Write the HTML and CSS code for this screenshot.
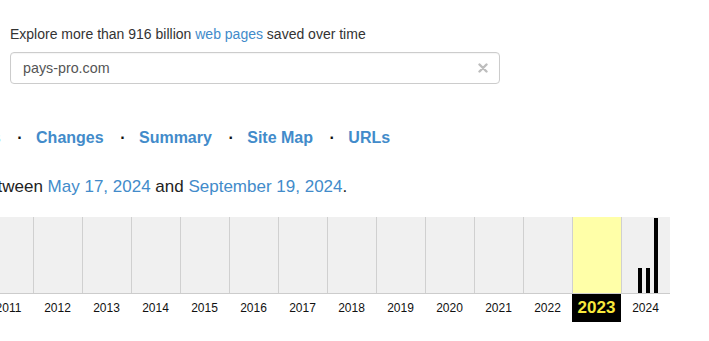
FILE: index.html
```html
<!DOCTYPE html>
<html lang="en">
<head>
<meta charset="utf-8">
<title>Wayback Machine</title>
<link rel="stylesheet" href="styles.css">
</head>
<body>
<div class="search">
  <p class="explore">Explore more than 916 billion <a href="#">web pages</a> saved over time</p>
  <div class="search-box">
    <span class="search-value">pays-pro.com</span>
    <svg class="search-clear" width="10" height="10" viewBox="0 0 10 10" aria-hidden="true"><path d="M1.5 1.5 L8.5 8.5 M8.5 1.5 L1.5 8.5" stroke="#bdbdbd" stroke-width="2.4" stroke-linecap="round"/></svg>
  </div>
</div>

<nav class="tabs">
  <a href="#" class="tab tab-first">Collections</a>
  <span class="sep">&middot;</span>
  <a href="#" class="tab">Changes</a>
  <span class="sep">&middot;</span>
  <a href="#" class="tab">Summary</a>
  <span class="sep">&middot;</span>
  <a href="#" class="tab">Site Map</a>
  <span class="sep">&middot;</span>
  <a href="#" class="tab">URLs</a>
</nav>

<p class="range"><span class="range-inner">between <a href="#">May 17, 2024</a> and <a href="#">September 19, 2024</a>.</span></p>

<div class="spark">
  <div class="cols">
    <div class="col"></div>
    <div class="col"></div>
    <div class="col"></div>
    <div class="col"></div>
    <div class="col"></div>
    <div class="col"></div>
    <div class="col"></div>
    <div class="col"></div>
    <div class="col"></div>
    <div class="col"></div>
    <div class="col"></div>
    <div class="col"></div>
    <div class="col col-current"></div>
    <div class="col">
      <span class="month"></span><span class="month"></span><span class="month"></span><span class="month"></span>
      <span class="month"><i class="bar" style="height:25px"></i></span>
      <span class="month"></span>
      <span class="month"><i class="bar" style="height:25px"></i></span>
      <span class="month"></span>
      <span class="month"><i class="bar" style="height:75px"></i></span>
      <span class="month"></span><span class="month"></span><span class="month"></span>
    </div>
  </div>
  <div class="years">
    <span class="year">2011</span>
    <span class="year">2012</span>
    <span class="year">2013</span>
    <span class="year">2014</span>
    <span class="year">2015</span>
    <span class="year">2016</span>
    <span class="year">2017</span>
    <span class="year">2018</span>
    <span class="year">2019</span>
    <span class="year">2020</span>
    <span class="year">2021</span>
    <span class="year">2022</span>
    <span class="year year-current">2023</span>
    <span class="year">2024</span>
  </div>
</div>
</body>
</html>
```

FILE: styles.css
```css
html, body {
  margin: 0;
  padding: 0;
  background: #fff;
  overflow: hidden;
}
body {
  font-family: "Liberation Sans", Arial, Helvetica, sans-serif;
  color: #333;
  width: 709px;
  height: 341px;
}
a {
  color: #428bca;
  text-decoration: none;
}

.search {
  padding: 24px 0 0 10px;
}
.explore {
  margin: 0;
  font-size: 14px;
  line-height: 20px;
  color: #333;
}
.search-box {
  margin-top: 8px;
  width: 490px;
  height: 32px;
  box-sizing: border-box;
  border: 1px solid #ccc;
  border-radius: 4px;
  padding: 0 11px 0 12px;
  display: flex;
  align-items: center;
  justify-content: space-between;
  box-shadow: inset 0 1px 1px rgba(0,0,0,0.04);
}
.search-value {
  font-size: 14.3px;
  color: #555;
}
.search-clear {
  display: block;
  flex: none;
}

.tabs {
  margin-top: 44px;
  display: flex;
  align-items: baseline;
  white-space: nowrap;
  font-size: 16px;
  line-height: 20px;
}
.tab {
  font-weight: bold;
}
.tab-first {
  margin-left: -85.5px;
}
.sep {
  margin: 0 13.5px 0 16.5px;
  color: #111;
  font-weight: bold;
}

.range {
  margin: 29px 0 0 0;
  font-size: 17px;
  line-height: 20px;
  white-space: nowrap;
  color: #222;
}
.range-inner {
  display: inline-block;
  margin-left: -21.4px;
}

.spark {
  margin-top: 20px;
}
.cols {
  margin-left: -16px;
  display: flex;
  height: 77px;
  width: 686px;
  box-sizing: border-box;
  border-bottom: 1px solid #ccc;
  background: #f0f0f0;
}
.col {
  width: 49px;
  flex: none;
  box-sizing: border-box;
  border-left: 1px solid #d0d0d0;
  display: flex;
  align-items: flex-end;
}
.col-current {
  background: #ffffa8;
}
.month {
  width: 4px;
  height: 100%;
  display: flex;
  align-items: flex-end;
}
.bar {
  display: block;
  width: 4px;
  background: #000;
}

.years {
  margin-left: -16px;
  display: flex;
}
.year {
  width: 49px;
  flex: none;
  height: 28px;
  line-height: 28px;
  text-align: center;
  font-size: 12px;
  color: #111;
}
.year-current {
  background: #000;
  color: #f8e83c;
  font-weight: bold;
  font-size: 17px;
}
```
